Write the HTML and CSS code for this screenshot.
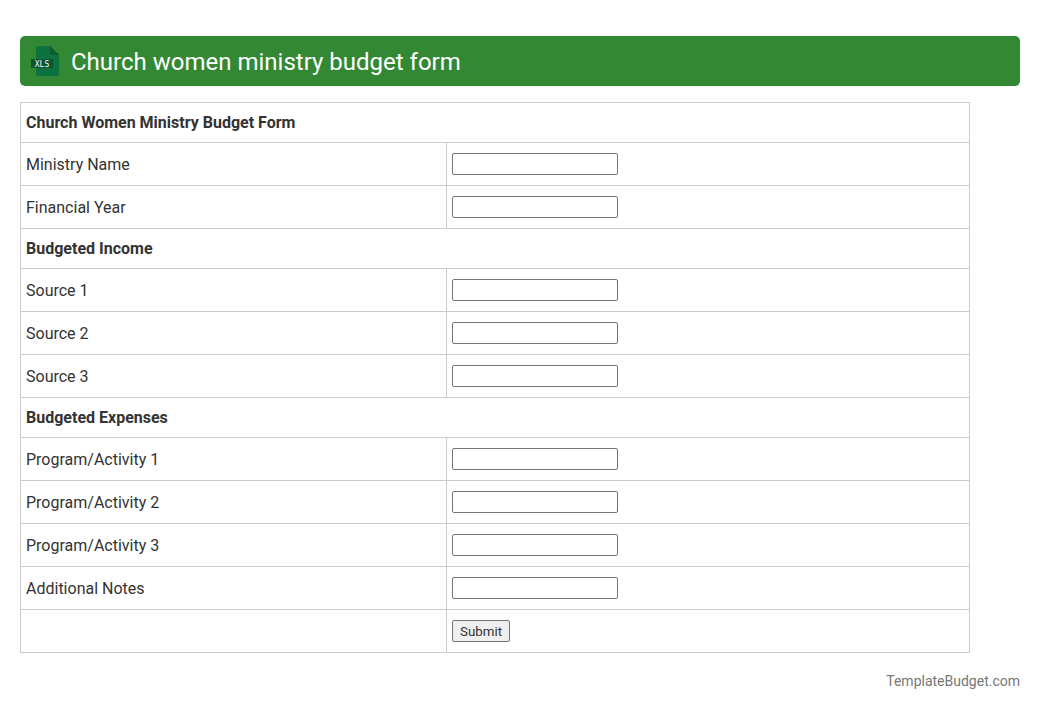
FILE: index.html
```html
<!DOCTYPE html>
<html lang="en">
<head>
<meta charset="utf-8">
<title>Church women ministry budget form</title>
<link rel="stylesheet" href="styles.css">
</head>
<body>
<header class="banner">
  <svg class="xls-icon" width="30" height="30" viewBox="0 0 30 30" aria-hidden="true">
    <path class="sheet" d="M7 0H19L28 9V28a2 2 0 0 1-2 2H7a2 2 0 0 1-2-2V2a2 2 0 0 1 2-2Z"/>
    <path class="fold" d="M19 0L28 9H21a2 2 0 0 1-2-2Z"/>
    <rect class="label" x="0" y="13" width="22" height="9"/>
    <text class="label-text" x="11" y="20.6" text-anchor="middle">XLS</text>
  </svg>
  <h1 class="title">Church women ministry budget form</h1>
</header>
<form class="form">
<table class="budget">
  <colgroup><col class="col-name"><col></colgroup>
  <tr class="head"><td colspan="2"><strong>Church Women Ministry Budget Form</strong></td></tr>
  <tr><td>Ministry Name</td><td class="field"><input class="text-input" type="text"></td></tr>
  <tr><td>Financial Year</td><td class="field"><input class="text-input" type="text"></td></tr>
  <tr class="head"><td colspan="2"><strong>Budgeted Income</strong></td></tr>
  <tr><td>Source 1</td><td class="field"><input class="text-input" type="text"></td></tr>
  <tr><td>Source 2</td><td class="field"><input class="text-input" type="text"></td></tr>
  <tr><td>Source 3</td><td class="field"><input class="text-input" type="text"></td></tr>
  <tr class="head"><td colspan="2"><strong>Budgeted Expenses</strong></td></tr>
  <tr><td>Program/Activity 1</td><td class="field"><input class="text-input" type="text"></td></tr>
  <tr><td>Program/Activity 2</td><td class="field"><input class="text-input" type="text"></td></tr>
  <tr><td>Program/Activity 3</td><td class="field"><input class="text-input" type="text"></td></tr>
  <tr><td>Additional Notes</td><td class="field"><input class="text-input" type="text"></td></tr>
  <tr><td></td><td class="field"><input class="submit" type="submit" value="Submit"></td></tr>
</table>
</form>
<footer class="credit">TemplateBudget.com</footer>
</body>
</html>
```
FILE: styles.css
```css
html, body {
  margin: 0;
  padding: 0;
  background: #fff;
}
body {
  padding: 36px 20px 0;
  font-family: Roboto, sans-serif;
  font-size: 16px;
  line-height: 24px;
  color: #333;
}
.banner {
  display: flex;
  align-items: center;
  gap: 10px;
  height: 50px;
  padding-left: 11px;
  background: #338833;
  border-radius: 5px;
}
.xls-icon { flex: none; }
.sheet { fill: #0e7240; }
.fold { fill: #0b5c30; }
.label { fill: #0a5530; }
.label-text {
  font-family: "DejaVu Sans Mono", monospace;
  font-size: 8px;
  fill: #fff;
}
.title {
  margin: 0;
  padding-top: 2px;
  font-size: 24px;
  font-weight: 400;
  line-height: 48px;
  color: #fff;
}
.form { margin: 16px 0 0; }
.budget {
  width: 950px;
  table-layout: fixed;
  border-collapse: collapse;
}
.col-name { width: 426px; }
.budget td {
  padding: 8px 5px 7px;
  border: 1px solid #ccc;
  vertical-align: middle;
}
.budget .field { padding: 10px 5px; }
.text-input, .submit {
  display: block;
  box-sizing: border-box;
  height: 22px;
  margin: 0;
  border: 1px solid #767676;
  border-radius: 2px;
}
.text-input {
  width: 166px;
  background: #fff;
}
.submit {
  width: 58px;
  padding: 0;
  font-family: Roboto, sans-serif;
  font-size: 13.33px;
  color: #333;
  background: #efefef;
}
.credit {
  margin-top: 16px;
  text-align: right;
  font-size: 14px;
  color: #777;
}
```
